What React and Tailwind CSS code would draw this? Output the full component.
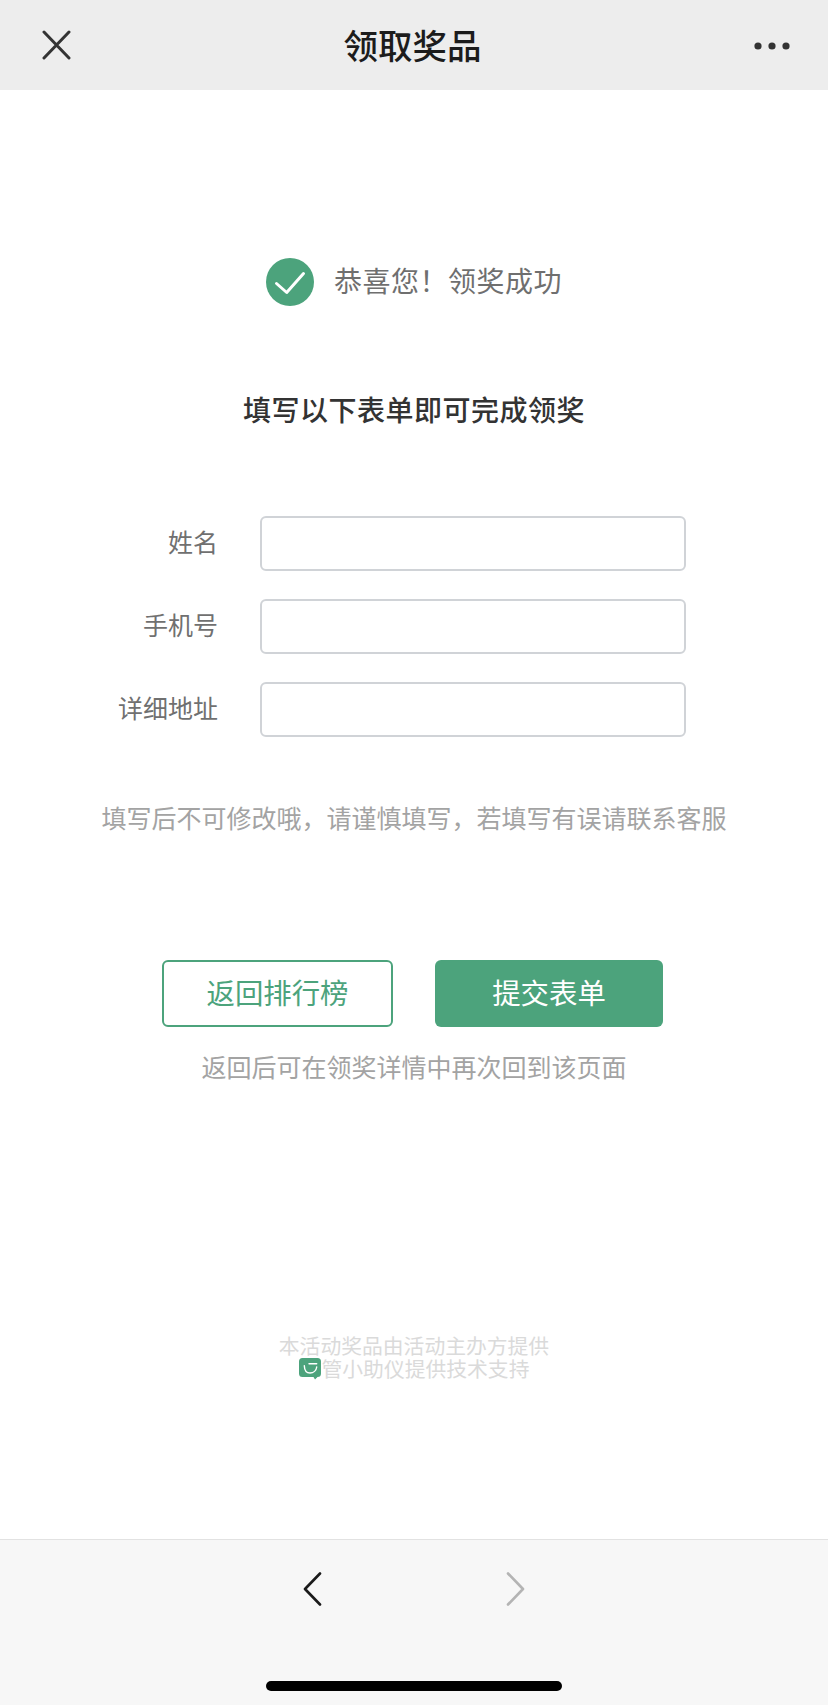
import React from "react";

const FONT = "font-['Noto_Sans_CJK_SC','Noto_Sans',sans-serif]";

function Row({ label }) {
  return (
    <div className="flex items-center h-[55px]">
      <label className="w-[218px] pb-[5px] text-right text-[25px] leading-[36px] text-[#707070]">{label}</label>
      <input className="ml-[42px] w-[426px] h-[55px] border-2 border-[#d0d3d7] rounded-[6px] bg-white outline-none" />
    </div>
  );
}

export default function App() {
  return (
    <div className={`w-[828px] h-[1705px] flex flex-col bg-white overflow-hidden ${FONT}`}>
      <header className="h-[90px] shrink-0 bg-[#ededed] flex items-center justify-between pl-[42px] pr-[38px]">
        <svg width="29" height="30" viewBox="0 0 29 30" fill="none" stroke="#333333" strokeWidth="3" strokeLinecap="round">
          <path d="M2 2 L27 28 M27 2 L2 28" />
        </svg>
        <h1 className="pb-[2px] text-[34.5px] leading-[48px] font-medium text-[#1c1c1c]">领取奖品</h1>
        <svg width="36" height="8" viewBox="0 0 36 8" fill="#333333" className="mt-[2px]">
          <circle cx="4" cy="4" r="3.6" />
          <circle cx="18" cy="4" r="3.6" />
          <circle cx="32" cy="4" r="3.6" />
        </svg>
      </header>

      <main className="flex-1 flex flex-col items-center pt-[168px]">
        <div className="flex items-center gap-[20px] h-[48px]">
          <svg width="48" height="48" viewBox="0 0 48 48">
            <circle cx="24" cy="24" r="24" fill="#4ca37c" />
            <path d="M10.5 25.5 L20.7 34.5 L37.5 15.5" fill="none" stroke="#ffffff" strokeWidth="3" strokeLinecap="round" strokeLinejoin="round" />
          </svg>
          <span className="pb-[5px] text-[28px] leading-[40px] tracking-[0.5px] text-[#6f6f6f]">恭喜您！领奖成功</span>
        </div>

        <h2 className="mt-[83px] h-[41px] text-[28px] leading-[40px] tracking-[0.5px] font-medium text-[#333333]">填写以下表单即可完成领奖</h2>

        <form className="mt-[86px] w-full flex flex-col gap-[28px]">
          <Row label="姓名" />
          <Row label="手机号" />
          <Row label="详细地址" />
        </form>

        <p className="mt-[62px] h-[39px] text-[25px] leading-[36px] text-[#a3a3a3]">填写后不可修改哦，请谨慎填写，若填写有误请联系客服</p>

        <div className="mt-[122px] w-full flex pl-[162px] gap-[42px]">
          <button className="w-[231px] h-[67px] pb-[3px] border-2 border-[#4ca37c] rounded-[6px] text-[28.4px] text-[#4ca37c] bg-white">返回排行榜</button>
          <button className="w-[228px] h-[67px] pb-[3px] rounded-[6px] text-[28.4px] text-white bg-[#4ca37c]">提交表单</button>
        </div>

        <p className="mt-[21px] h-[38px] text-[25px] leading-[36px] text-[#a3a3a3]">返回后可在领奖详情中再次回到该页面</p>

        <div className="mt-[248px] flex flex-col items-center text-[20.8px] leading-[23px] text-[#dadada]">
          <span>本活动奖品由活动主办方提供</span>
          <span className="flex items-center">
            <svg width="23" height="22" viewBox="0 0 23 22">
              <path d="M3.5 0 H18.5 A3.5 3.5 0 0 1 22 3.5 V15.5 A3.5 3.5 0 0 1 18.5 19 H18.5 L16 21.5 L14.5 19 H3.5 A3.5 3.5 0 0 1 0 15.5 V3.5 A3.5 3.5 0 0 1 3.5 0 Z" fill="#4ca37c" />
              <path d="M5.3 7.7 C5.5 12.5 8 15 11 15 C14.5 15 17.3 12.5 17.7 9 M10 5.7 L17.7 5.7" fill="none" stroke="#ffffff" strokeWidth="1.4" strokeLinecap="round" />
            </svg>
            管小助仪提供技术支持
          </span>
        </div>
      </main>

      <footer className="h-[166px] shrink-0 bg-[#f7f7f7] border-t border-[#e2e2e2] flex flex-col items-center">
        <div className="flex items-start gap-[184px] mt-[32px]">
          <svg width="19" height="34" viewBox="0 0 19 34" fill="none" stroke="#1a1a1a" strokeWidth="2.6" strokeLinecap="round" strokeLinejoin="round">
            <path d="M17 1.5 L2 17 L17 32.5" />
          </svg>
          <svg width="19" height="34" viewBox="0 0 19 34" fill="none" stroke="#b4b4b4" strokeWidth="2.6" strokeLinecap="round" strokeLinejoin="round">
            <path d="M2 1.5 L17 17 L2 32.5" />
          </svg>
        </div>
        <div className="mt-[75px] w-[296px] h-[10px] rounded-full bg-black" />
      </footer>
    </div>
  );
}
